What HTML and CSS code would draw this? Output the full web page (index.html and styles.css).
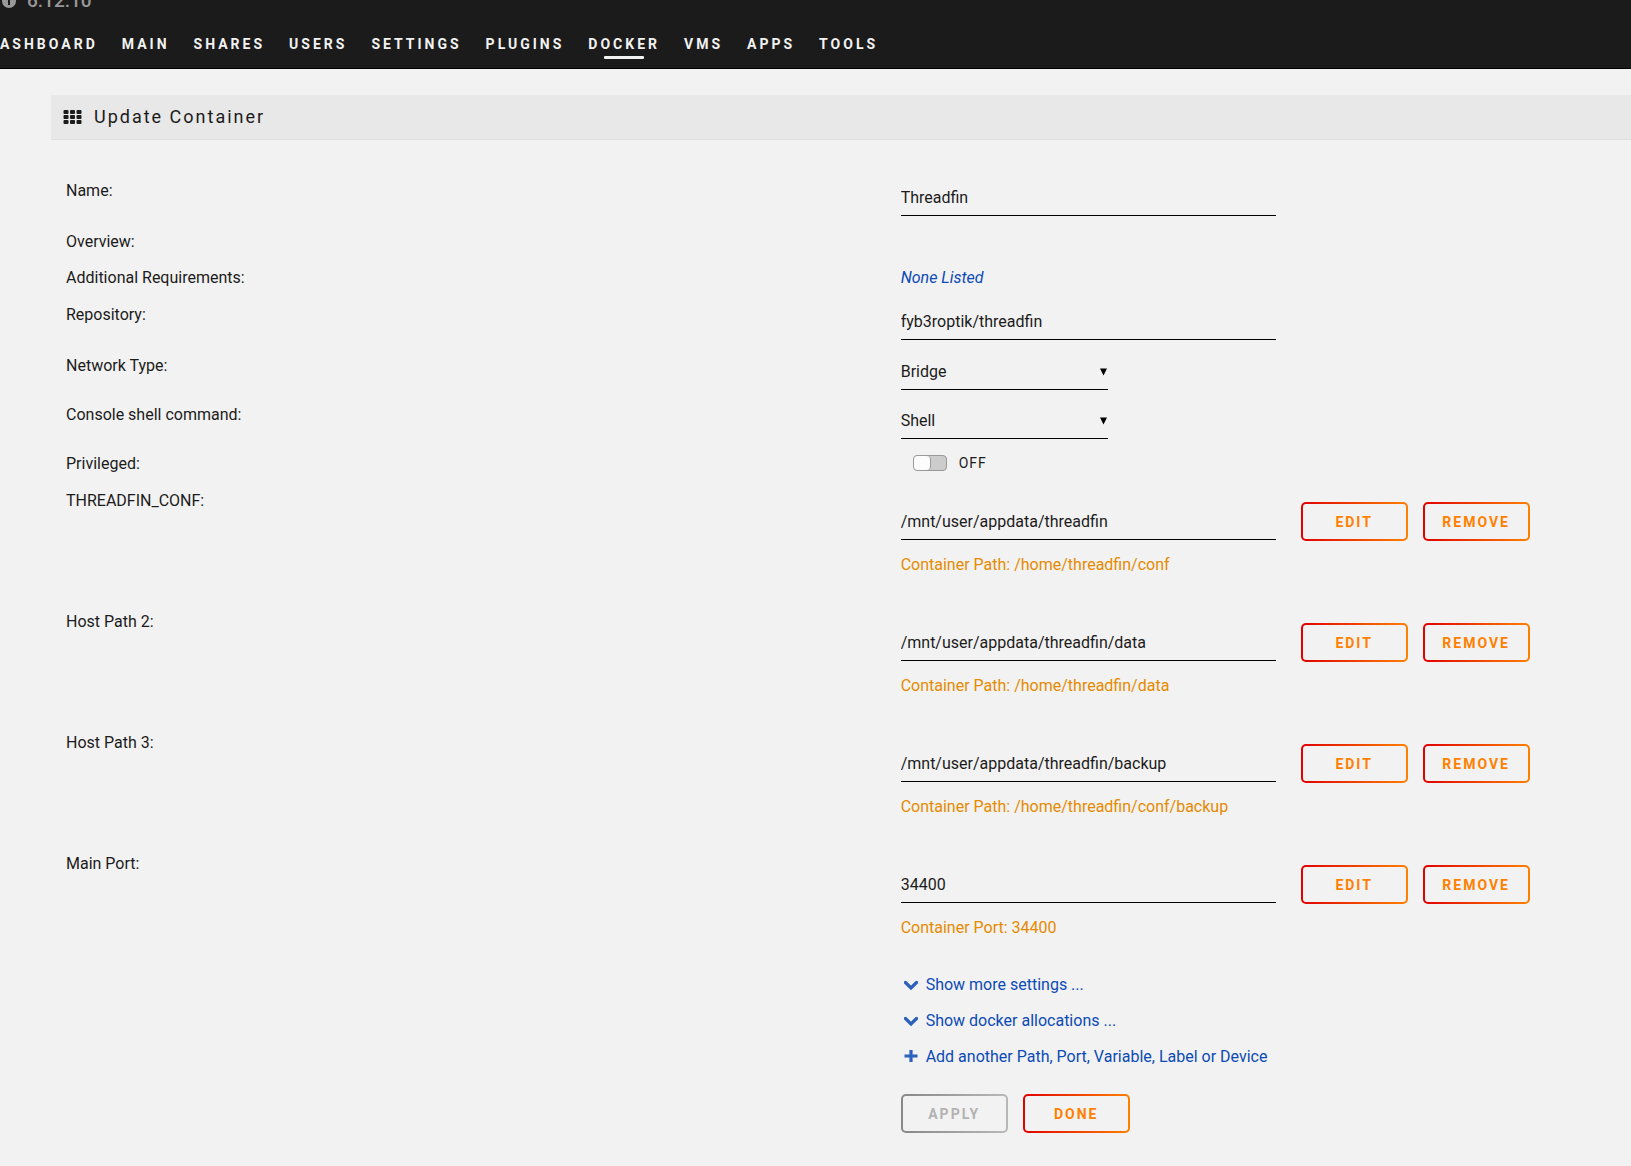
FILE: index.html
```html
<!DOCTYPE html>
<html lang="en">
<head>
<meta charset="utf-8">
<title>Update Container</title>
<link rel="stylesheet" href="styles.css">
</head>
<body>
<header class="header">
  <div class="version">
    <svg class="version-icon" viewBox="0 0 16 16" aria-hidden="true"><circle cx="8" cy="8" r="7" fill="#999"/><path d="M8 7v5M8 4v1" stroke="#1c1b1b" stroke-width="2"/></svg>
    <span>6.12.10</span>
  </div>
  <nav class="nav">
    <a href="#">DASHBOARD</a>
    <a href="#">MAIN</a>
    <a href="#">SHARES</a>
    <a href="#">USERS</a>
    <a href="#">SETTINGS</a>
    <a href="#">PLUGINS</a>
    <a href="#" class="active" aria-current="page">DOCKER</a>
    <a href="#">VMS</a>
    <a href="#">APPS</a>
    <a href="#">TOOLS</a>
  </nav>
</header>
<main class="main">
  <h1 class="title">
    <svg class="title-icon" viewBox="0 0 18 14" aria-hidden="true"><g fill="#1c1b1b"><rect width="5" height="4" rx="1"/><rect x="6.500" width="5" height="4" rx="1"/><rect x="13" width="5" height="4" rx="1"/><rect y="5" width="5" height="4" rx="1"/><rect x="6.500" y="5" width="5" height="4" rx="1"/><rect x="13" y="5" width="5" height="4" rx="1"/><rect y="10" width="5" height="4" rx="1"/><rect x="6.500" y="10" width="5" height="4" rx="1"/><rect x="13" y="10" width="5" height="4" rx="1"/></g></svg>
    <span>Update Container</span>
  </h1>
  <form class="form">
    <div class="row row-input">
      <label for="name">Name:</label>
      <input class="text" id="name" type="text" value="Threadfin">
    </div>
    <div class="row"><span>Overview:</span></div>
    <div class="row row-note"><span>Additional Requirements:</span><em class="none">None Listed</em></div>
    <div class="row row-input">
      <label for="repo">Repository:</label>
      <input class="text" id="repo" type="text" value="fyb3roptik/threadfin">
    </div>
    <div class="row row-select">
      <label for="network">Network Type:</label>
      <div class="select">
        <select id="network"><option>Bridge</option></select>
        <svg class="arrow" viewBox="0 0 8 8" aria-hidden="true"><path d="M0 0h8L4 8z"/></svg>
      </div>
    </div>
    <div class="row row-select">
      <label for="shell">Console shell command:</label>
      <div class="select">
        <select id="shell"><option>Shell</option></select>
        <svg class="arrow" viewBox="0 0 8 8" aria-hidden="true"><path d="M0 0h8L4 8z"/></svg>
      </div>
    </div>
    <div class="row row-note">
      <label for="privileged">Privileged:</label>
      <div class="toggle"><input id="privileged" type="checkbox"><span>OFF</span></div>
    </div>
    <div class="row row-path">
      <label for="conf">THREADFIN_CONF:</label>
      <div>
        <div class="field"><input class="text" id="conf" type="text" value="/mnt/user/appdata/threadfin"><div class="buttons"><button type="button">EDIT</button><button type="button">REMOVE</button></div></div>
        <p class="hint">Container Path: /home/threadfin/conf</p>
      </div>
    </div>
    <div class="row row-path">
      <label for="path2">Host Path 2:</label>
      <div>
        <div class="field"><input class="text" id="path2" type="text" value="/mnt/user/appdata/threadfin/data"><div class="buttons"><button type="button">EDIT</button><button type="button">REMOVE</button></div></div>
        <p class="hint">Container Path: /home/threadfin/data</p>
      </div>
    </div>
    <div class="row row-path">
      <label for="path3">Host Path 3:</label>
      <div>
        <div class="field"><input class="text" id="path3" type="text" value="/mnt/user/appdata/threadfin/backup"><div class="buttons"><button type="button">EDIT</button><button type="button">REMOVE</button></div></div>
        <p class="hint">Container Path: /home/threadfin/conf/backup</p>
      </div>
    </div>
    <div class="row row-path">
      <label for="port">Main Port:</label>
      <div>
        <div class="field"><input class="text" id="port" type="text" value="34400"><div class="buttons"><button type="button">EDIT</button><button type="button">REMOVE</button></div></div>
        <p class="hint">Container Port: 34400</p>
      </div>
    </div>
    <div class="row">
      <div class="actions">
        <a href="#"><svg viewBox="0 0 14 14" aria-hidden="true"><path d="M1.500 4.500L7 10 12.500 4.500" fill="none" stroke="currentColor" stroke-width="3.200" stroke-linecap="round"/></svg>Show more settings ...</a>
        <a href="#"><svg viewBox="0 0 14 14" aria-hidden="true"><path d="M1.500 4.500L7 10 12.500 4.500" fill="none" stroke="currentColor" stroke-width="3.200" stroke-linecap="round"/></svg>Show docker allocations ...</a>
        <a href="#"><svg viewBox="0 0 14 14" aria-hidden="true"><path d="M7 0v12M.5 6h13" fill="none" stroke="currentColor" stroke-width="3.200"/></svg>Add another Path, Port, Variable, Label or Device</a>
        <div class="buttons submit"><button type="submit" disabled>APPLY</button><button type="button">DONE</button></div>
      </div>
    </div>
  </form>
</main>
</body>
</html>
```
FILE: styles.css
```css
* {
  box-sizing: border-box;
}

body {
  margin: 0;
  background: #f2f2f2;
  color: #1c1b1b;
  font: 16px/36px Roboto, "Liberation Sans", sans-serif;
  overflow-x: hidden;
}

input,
select,
button {
  font: inherit;
  color: inherit;
  margin: 0;
}

a {
  text-decoration: none;
}

.header {
  height: 69px;
  background: #1c1b1b;
  border-bottom: 1px solid #000;
  overflow: hidden;
}

.version {
  display: flex;
  align-items: center;
  gap: 10px;
  height: 24px;
  margin-top: -11px;
  padding-left: 1px;
  color: #999;
  font-size: 19px;
  font-weight: 500;
}

.version-icon {
  width: 16px;
  height: 16px;
}

.nav {
  display: flex;
  gap: 24px;
  margin: 17px 0 0 -12px;
  font-size: 14px;
  line-height: 28px;
  font-weight: 700;
  letter-spacing: 3px;
}

.nav a {
  color: #f2f2f2;
}

.nav .active {
  position: relative;
}

.nav .active::after {
  content: "";
  position: absolute;
  left: 50%;
  bottom: -1px;
  width: 40px;
  height: 3px;
  margin-left: -20px;
  border-radius: 1px;
  background: #f2f2f2;
}

.main {
  padding: 26px 0 32px 51px;
}

.title {
  display: flex;
  align-items: center;
  gap: 12px;
  height: 45px;
  margin: 0;
  padding-left: 12px;
  background: #e8e8e8;
  border-bottom: 1px solid #dedede;
  font-size: 18px;
  font-weight: 400;
  letter-spacing: 2px;
}

.title-icon {
  width: 19px;
  height: 14px;
}

.form {
  padding: 32px 0 0 15px;
}

.row {
  display: grid;
  grid-template-columns: minmax(0, 8fr) minmax(0, 7fr);
  align-items: start;
  min-height: 36px;
}

.row > :last-child:not(:first-child),
.actions {
  grid-column: 2;
}

.row > label,
.row > span,
.row > .none {
  height: 36px;
  padding-top: 1px;
}

.row-note {
  min-height: 37px;
}

.row-input {
  min-height: 51px;
}

.row-select {
  min-height: 49px;
}

.row-path {
  min-height: 121px;
}

.text,
.select {
  width: 375px;
  height: 38px;
  margin-top: 6px;
}

.text,
.select select {
  padding: 1px 0 0;
  border: 0;
  border-bottom: 1px solid #000;
  border-radius: 0;
  background: none;
  outline: 0;
}

.select {
  position: relative;
  width: 207px;
  height: 37px;
}

.select select {
  display: block;
  width: 100%;
  height: 100%;
  appearance: none;
}

.arrow {
  position: absolute;
  right: 1px;
  top: 15px;
  width: 7px;
  height: 8px;
  pointer-events: none;
}

.none {
  color: #0c4ab5;
}

.toggle {
  display: flex;
  align-items: center;
  gap: 12px;
  height: 36px;
  padding-left: 12px;
  font-size: 14px;
  letter-spacing: 1px;
}

.toggle input {
  width: 34px;
  height: 16px;
  appearance: none;
  border: 1px solid #999;
  border-radius: 4px;
  background: #ccc;
}

.toggle input::before {
  content: "";
  display: block;
  width: 16px;
  height: 14px;
  border-right: 1px solid #999;
  border-radius: 4px;
  background: #fcfcfc;
}

.field {
  display: flex;
  gap: 25px;
  padding-top: 20px;
}

.field .text {
  margin: 0;
}

.buttons {
  display: flex;
  gap: 15px;
}

button {
  width: 107px;
  height: 39px;
  padding: 0;
  border: 2px solid transparent;
  border-radius: 5px;
  background: linear-gradient(#f2f2f2, #f2f2f2) padding-box, linear-gradient(90deg, #e00000, #ff8000) border-box;
  color: #ff8000;
  font-size: 14px;
  font-weight: 700;
  line-height: 34px;
  letter-spacing: 2px;
}

button:disabled {
  background: linear-gradient(#f2f2f2, #f2f2f2) padding-box, linear-gradient(90deg, #888, #b8b8b8) border-box;
  color: #b2b2b2;
}

.hint {
  margin: 6px 0 0;
  color: #e68a00;
}

.actions {
  display: flex;
  flex-direction: column;
  padding-top: 1px;
}

.actions a {
  display: flex;
  align-items: center;
  gap: 8px;
  padding-left: 3px;
  color: #0c4ab5;
}

.actions svg {
  width: 14px;
  height: 14px;
  color: #2c60bb;
}

.submit {
  margin-top: 19px;
}
```
